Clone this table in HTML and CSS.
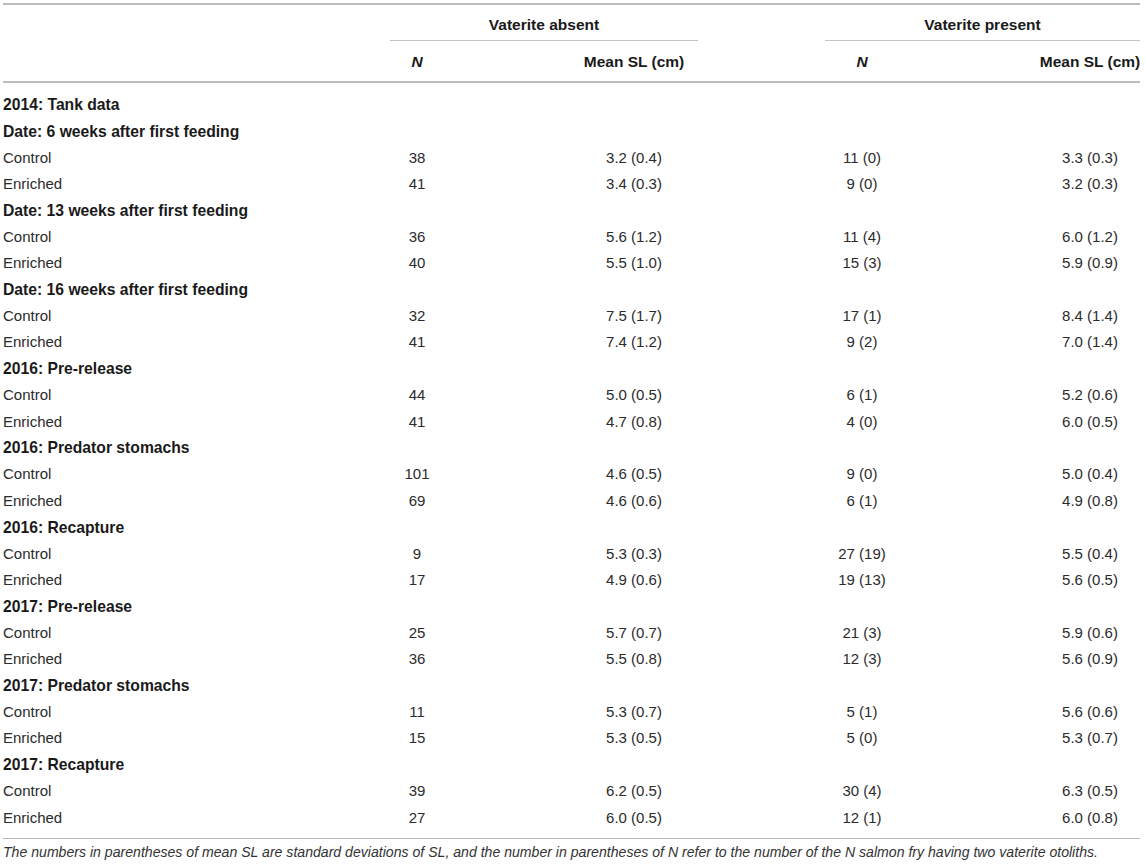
FILE: index.html
```html
<!DOCTYPE html>
<html lang="en">
<head>
<meta charset="utf-8">
<title>Vaterite table</title>
<link rel="stylesheet" href="styles.css">
</head>
<body>
<div class="tbl">
  <div class="head">
    <div class="row hrow1">
      <div class="c-label"></div>
      <div class="group g-absent">Vaterite absent</div>
      <div class="group g-present">Vaterite present</div>
    </div>
    <div class="row hrow2">
      <div class="c-label"></div>
      <div class="c-n1"><i>N</i></div>
      <div class="c-m1">Mean SL (cm)</div>
      <div class="c-n2"><i>N</i></div>
      <div class="c-m2">Mean SL (cm)</div>
    </div>
  </div>
  <div class="body">
    <div class="row sec"><div class="c-label">2014: Tank data</div></div>
    <div class="row sec"><div class="c-label">Date: 6 weeks after first feeding</div></div>
    <div class="row"><div class="c-label">Control</div><div class="c-n1">38</div><div class="c-m1">3.2 (0.4)</div><div class="c-n2">11 (0)</div><div class="c-m2">3.3 (0.3)</div></div>
    <div class="row"><div class="c-label">Enriched</div><div class="c-n1">41</div><div class="c-m1">3.4 (0.3)</div><div class="c-n2">9 (0)</div><div class="c-m2">3.2 (0.3)</div></div>
    <div class="row sec"><div class="c-label">Date: 13 weeks after first feeding</div></div>
    <div class="row"><div class="c-label">Control</div><div class="c-n1">36</div><div class="c-m1">5.6 (1.2)</div><div class="c-n2">11 (4)</div><div class="c-m2">6.0 (1.2)</div></div>
    <div class="row"><div class="c-label">Enriched</div><div class="c-n1">40</div><div class="c-m1">5.5 (1.0)</div><div class="c-n2">15 (3)</div><div class="c-m2">5.9 (0.9)</div></div>
    <div class="row sec"><div class="c-label">Date: 16 weeks after first feeding</div></div>
    <div class="row"><div class="c-label">Control</div><div class="c-n1">32</div><div class="c-m1">7.5 (1.7)</div><div class="c-n2">17 (1)</div><div class="c-m2">8.4 (1.4)</div></div>
    <div class="row"><div class="c-label">Enriched</div><div class="c-n1">41</div><div class="c-m1">7.4 (1.2)</div><div class="c-n2">9 (2)</div><div class="c-m2">7.0 (1.4)</div></div>
    <div class="row sec"><div class="c-label">2016: Pre-release</div></div>
    <div class="row"><div class="c-label">Control</div><div class="c-n1">44</div><div class="c-m1">5.0 (0.5)</div><div class="c-n2">6 (1)</div><div class="c-m2">5.2 (0.6)</div></div>
    <div class="row"><div class="c-label">Enriched</div><div class="c-n1">41</div><div class="c-m1">4.7 (0.8)</div><div class="c-n2">4 (0)</div><div class="c-m2">6.0 (0.5)</div></div>
    <div class="row sec"><div class="c-label">2016: Predator stomachs</div></div>
    <div class="row"><div class="c-label">Control</div><div class="c-n1">101</div><div class="c-m1">4.6 (0.5)</div><div class="c-n2">9 (0)</div><div class="c-m2">5.0 (0.4)</div></div>
    <div class="row"><div class="c-label">Enriched</div><div class="c-n1">69</div><div class="c-m1">4.6 (0.6)</div><div class="c-n2">6 (1)</div><div class="c-m2">4.9 (0.8)</div></div>
    <div class="row sec"><div class="c-label">2016: Recapture</div></div>
    <div class="row"><div class="c-label">Control</div><div class="c-n1">9</div><div class="c-m1">5.3 (0.3)</div><div class="c-n2">27 (19)</div><div class="c-m2">5.5 (0.4)</div></div>
    <div class="row"><div class="c-label">Enriched</div><div class="c-n1">17</div><div class="c-m1">4.9 (0.6)</div><div class="c-n2">19 (13)</div><div class="c-m2">5.6 (0.5)</div></div>
    <div class="row sec"><div class="c-label">2017: Pre-release</div></div>
    <div class="row"><div class="c-label">Control</div><div class="c-n1">25</div><div class="c-m1">5.7 (0.7)</div><div class="c-n2">21 (3)</div><div class="c-m2">5.9 (0.6)</div></div>
    <div class="row"><div class="c-label">Enriched</div><div class="c-n1">36</div><div class="c-m1">5.5 (0.8)</div><div class="c-n2">12 (3)</div><div class="c-m2">5.6 (0.9)</div></div>
    <div class="row sec"><div class="c-label">2017: Predator stomachs</div></div>
    <div class="row"><div class="c-label">Control</div><div class="c-n1">11</div><div class="c-m1">5.3 (0.7)</div><div class="c-n2">5 (1)</div><div class="c-m2">5.6 (0.6)</div></div>
    <div class="row"><div class="c-label">Enriched</div><div class="c-n1">15</div><div class="c-m1">5.3 (0.5)</div><div class="c-n2">5 (0)</div><div class="c-m2">5.3 (0.7)</div></div>
    <div class="row sec"><div class="c-label">2017: Recapture</div></div>
    <div class="row"><div class="c-label">Control</div><div class="c-n1">39</div><div class="c-m1">6.2 (0.5)</div><div class="c-n2">30 (4)</div><div class="c-m2">6.3 (0.5)</div></div>
    <div class="row"><div class="c-label">Enriched</div><div class="c-n1">27</div><div class="c-m1">6.0 (0.5)</div><div class="c-n2">12 (1)</div><div class="c-m2">6.0 (0.8)</div></div>
  </div>
  <p class="note">The numbers in parentheses of mean SL are standard deviations of SL, and the number in parentheses of N refer to the number of the N salmon fry having two vaterite otoliths.</p>
</div>
</body>
</html>
```

FILE: styles.css
```css
html, body {
  margin: 0;
  padding: 0;
  background: #ffffff;
}

body {
  font-family: "Liberation Sans", Arial, Helvetica, sans-serif;
  color: #2b2b2b;
}

.tbl {
  margin-left: 3px;
  width: 1137px;
  padding-top: 3px;
}

.row {
  display: grid;
  grid-template-columns: 387px 54px 126px 128px 127px 74px 141px 100px;
  align-items: center;
  font-size: 15px;
  height: 26.42px;
}

.c-label { grid-column: 1; }
.c-n1 { grid-column: 2; text-align: center; white-space: nowrap; }
.c-m1 { grid-column: 4; text-align: center; white-space: nowrap; }
.c-n2 { grid-column: 6; text-align: center; white-space: nowrap; }
.c-m2 { grid-column: 8; text-align: center; white-space: nowrap; }

.head {
  border-top: 2px solid #bdbdbd;
  border-bottom: 2px solid #bdbdbd;
  font-weight: bold;
  color: #1a1a1a;
}

.head .row {
  font-size: 15.5px;
}

.hrow1 {
  height: 36px;
  align-items: stretch;
}

.group {
  display: flex;
  align-items: center;
  justify-content: center;
  padding-top: 5px;
  border-bottom: 1px solid #c4c4c4;
  box-sizing: border-box;
}

.g-absent { grid-column: 2 / 5; }
.g-present { grid-column: 6 / 9; }

.hrow2 {
  height: 40px;
  padding-top: 1px;
  box-sizing: border-box;
}

.hrow2 .c-m1,
.hrow2 .c-m2 {
  justify-self: center;
}

.body {
  padding: 8px 0;
  border-bottom: 1px solid #b8b8b8;
}

.sec {
  font-weight: bold;
  color: #1a1a1a;
  font-size: 15.7px;
}

.sec .c-label {
  grid-column: 1 / 9;
  white-space: nowrap;
  padding-top: 2px;
}

.note {
  margin: 0;
  padding-top: 5px;
  font-size: 14.1px;
  line-height: 16px;
  font-style: italic;
  color: #333333;
  white-space: nowrap;
}
```
